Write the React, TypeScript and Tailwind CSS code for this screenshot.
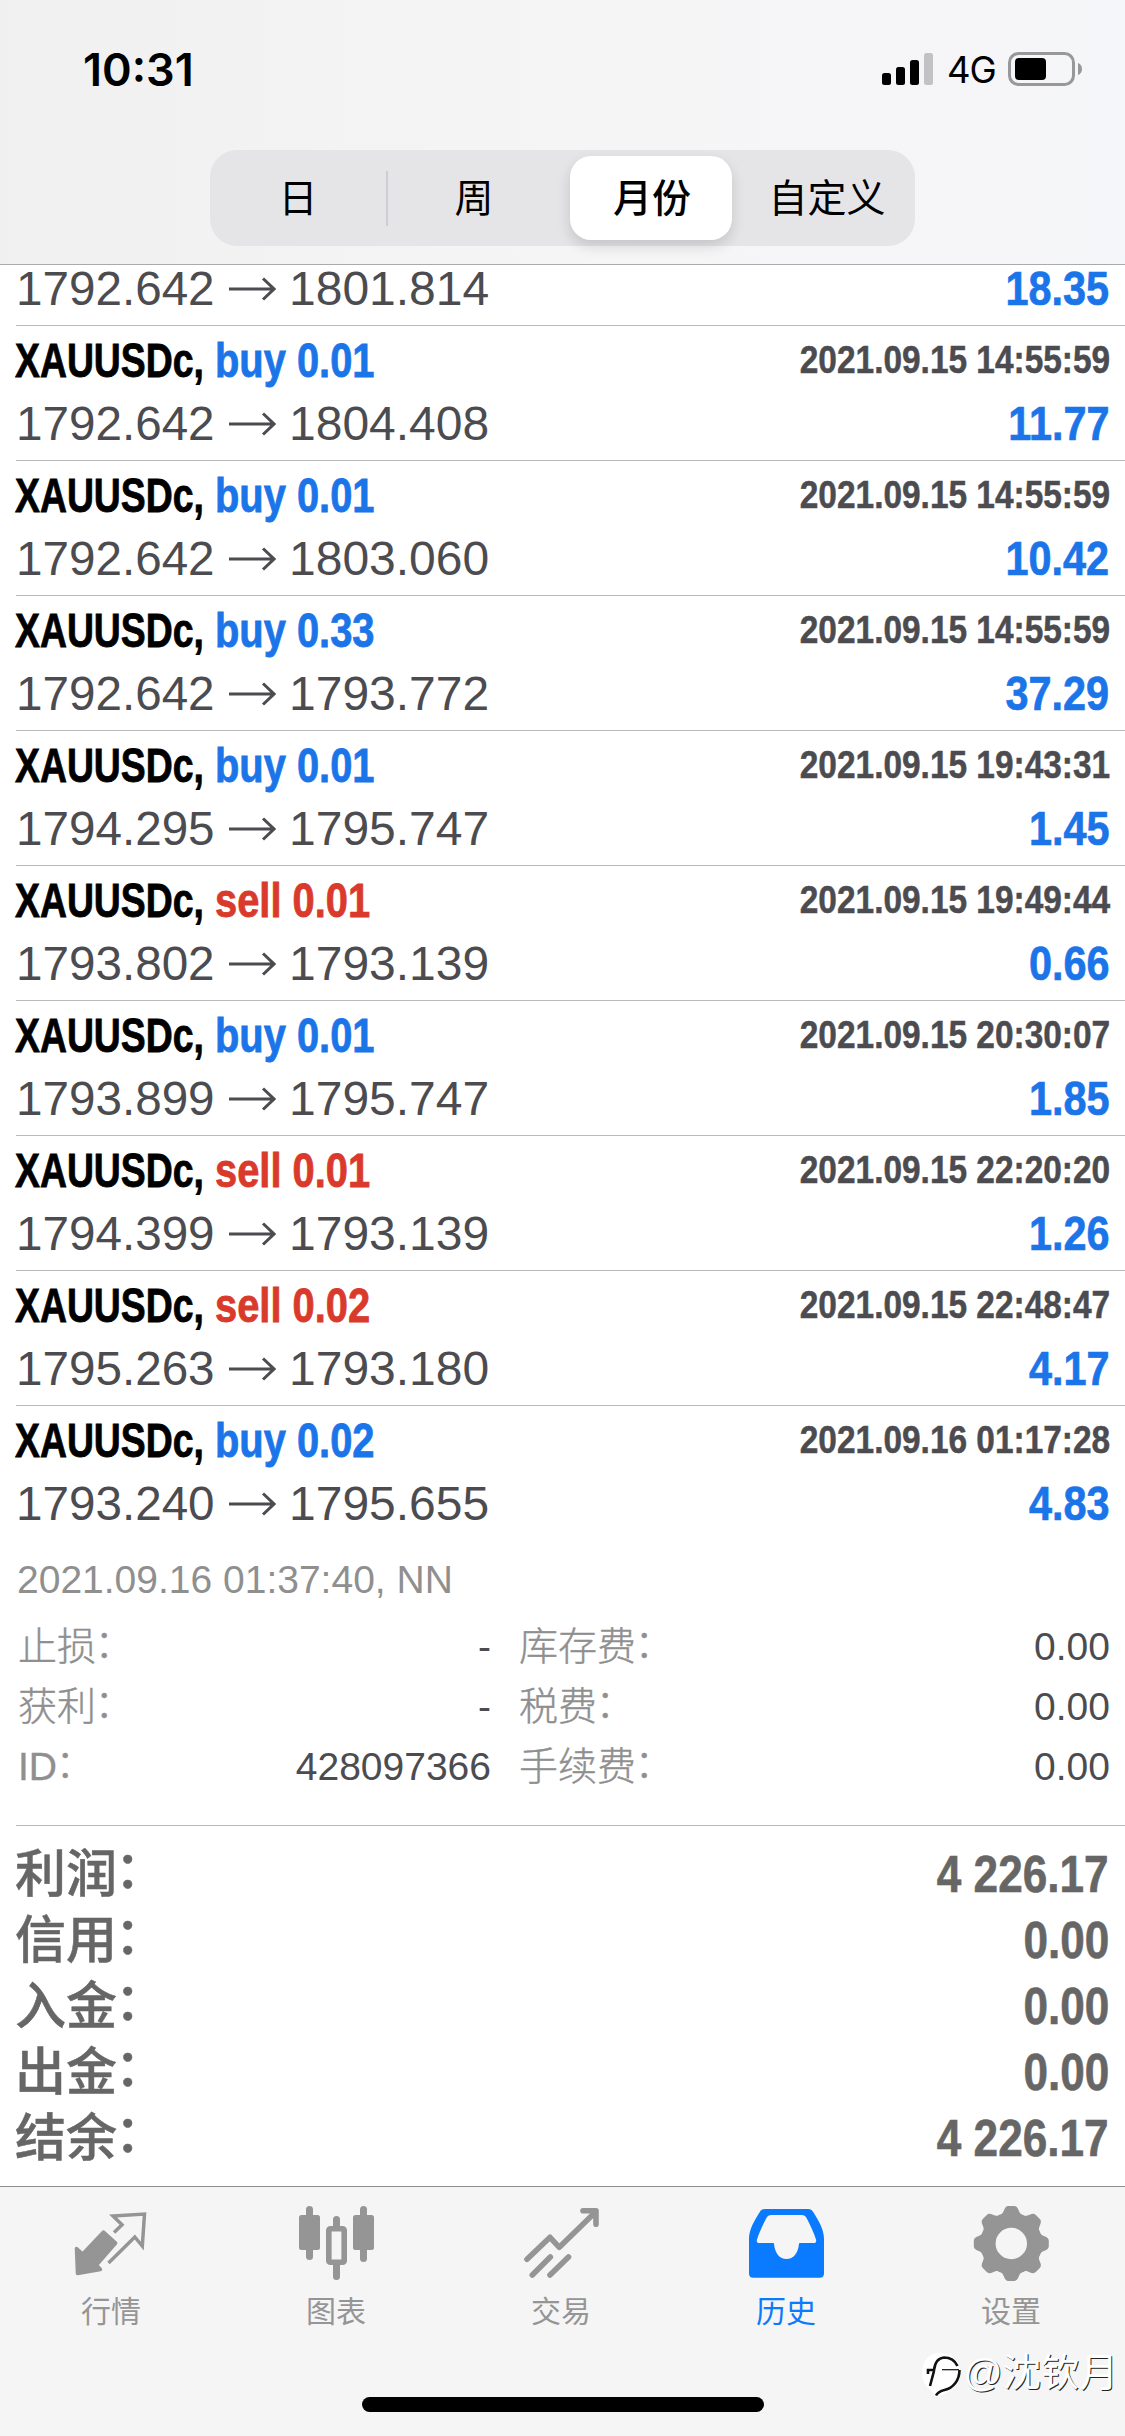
import type { ReactNode } from "react";
import clsx from "clsx";

type Side = "buy" | "sell";

interface Deal {
  side: Side;
  volume: string;
  closedAt: string;
  open: string;
  close: string;
  profit: string;
}

const SYMBOL = "XAUUSDc,";

const deals: Deal[] = [
  { side: "buy", volume: "0.01", closedAt: "2021.09.15 14:55:59", open: "1792.642", close: "1804.408", profit: "11.77" },
  { side: "buy", volume: "0.01", closedAt: "2021.09.15 14:55:59", open: "1792.642", close: "1803.060", profit: "10.42" },
  { side: "buy", volume: "0.33", closedAt: "2021.09.15 14:55:59", open: "1792.642", close: "1793.772", profit: "37.29" },
  { side: "buy", volume: "0.01", closedAt: "2021.09.15 19:43:31", open: "1794.295", close: "1795.747", profit: "1.45" },
  { side: "sell", volume: "0.01", closedAt: "2021.09.15 19:49:44", open: "1793.802", close: "1793.139", profit: "0.66" },
  { side: "buy", volume: "0.01", closedAt: "2021.09.15 20:30:07", open: "1793.899", close: "1795.747", profit: "1.85" },
  { side: "sell", volume: "0.01", closedAt: "2021.09.15 22:20:20", open: "1794.399", close: "1793.139", profit: "1.26" },
  { side: "sell", volume: "0.02", closedAt: "2021.09.15 22:48:47", open: "1795.263", close: "1793.180", profit: "4.17" },
  { side: "buy", volume: "0.02", closedAt: "2021.09.16 01:17:28", open: "1793.240", close: "1795.655", profit: "4.83" },
];

const details = [
  ["止损", "-", "库存费", "0.00"],
  ["获利", "-", "税费", "0.00"],
  ["ID", "428097366", "手续费", "0.00"],
];

const totals = [
  ["利润", "4 226.17"],
  ["信用", "0.00"],
  ["入金", "0.00"],
  ["出金", "0.00"],
  ["结余", "4 226.17"],
];

function StatusBar() {
  return (
    <div className="flex h-[150px] items-start justify-between pr-[42px] pl-[83px]">
      <span className="mt-[47px] font-['Inter',sans-serif] text-[45px] leading-[46px] font-semibold text-black">
        10:31
      </span>
      <div className="mt-[50px] flex h-[38px] items-center">
        <svg className="h-[38px] w-[53px]" viewBox="0 0 53 38">
          <rect x="0" y="23" width="9" height="12" rx="2.5" />
          <rect x="14" y="17" width="9" height="18" rx="2.5" />
          <rect x="28" y="10" width="9" height="25" rx="2.5" />
          <rect x="42" y="3" width="9" height="32" rx="2.5" fill="#c2c2c4" />
        </svg>
        <span className="mt-[2px] ml-[12px] w-[50px] font-['Inter',sans-serif] text-[36.5px] leading-[38px] tracking-[-1px] text-black">
          4G
        </span>
        <svg className="ml-[11px] h-[38px] w-[75px]" viewBox="0 0 75 38">
          <rect x="1.500" y="3.500" width="64" height="31" rx="9" fill="none" stroke="#98989a" strokeWidth="3" />
          <rect x="7" y="8" width="31" height="22" rx="4" />
          <path d="M70 13c3 1.200 4 3.500 4 6s-1 4.800-4 6z" fill="#98989a" />
        </svg>
      </div>
    </div>
  );
}

function PeriodTabs() {
  const cell = "flex w-[176px] items-center justify-center";
  return (
    <div className="mx-auto flex h-[96px] w-[705px] rounded-[27px] bg-[#e5e5e8] text-[39px] leading-none text-black">
      <div className={cell}>日</div>
      <div className="my-auto -mr-0.5 h-[55px] w-0.5 bg-[#cdced3]" />
      <div className={cell}>周</div>
      <div className="w-[177px] pr-[7px] pl-[8px] py-[6px]">
        <div className="flex h-[84px] items-center justify-center rounded-[21px] bg-white pl-[2px] font-medium shadow-[0_6px_14px_rgba(0,0,0,0.14)]">
          月份
        </div>
      </div>
      <div className={cell}>自定义</div>
    </div>
  );
}

function PriceLine({ open, close, profit }: Pick<Deal, "open" | "close" | "profit">) {
  return (
    <>
      <div className="flex items-center text-[48px] text-[#4c4c50]">
        <span className="w-[213px] origin-left scale-x-[0.992]">{open}</span>
        <svg className="h-[24px] w-[47px]" viewBox="0 0 47 24" fill="none" stroke="currentColor" strokeWidth="3">
          <path d="M0 12h45M34 1.500l11 10.500-11 10.500" />
        </svg>
        <span className="ml-[13px]">{close}</span>
      </div>
      <span className="origin-right scale-x-[0.862] text-[48px] font-bold text-[#1b75e8] [-webkit-text-stroke:0.7px]">
        {profit}
      </span>
    </>
  );
}

function DealRow({ deal }: { deal: Deal }) {
  return (
    <div className="ml-[16px] h-[135px] border-t border-[#b9b9bc] pt-[3px] pr-[16px]">
      <div className="flex h-[63px] justify-between leading-[63px] font-bold">
        <div className="-ml-px flex text-[48px] [-webkit-text-stroke:0.8px]">
          <span className="w-[200px] origin-left scale-x-[0.778] whitespace-nowrap text-black">{SYMBOL}</span>
          <span
            className={clsx(
              "origin-left scale-x-[0.83] whitespace-nowrap",
              deal.side === "buy" ? "text-[#1b75e8]" : "text-[#d93a2b]",
            )}
          >
            {deal.side} {deal.volume}
          </span>
        </div>
        <span className="-mr-px origin-right scale-x-[0.857] text-[39px] leading-[61px] text-[#4c4c50] [-webkit-text-stroke:0.5px]">
          {deal.closedAt}
        </span>
      </div>
      <div className="flex h-[63px] justify-between leading-[63px]">
        <PriceLine open={deal.open} close={deal.close} profit={deal.profit} />
      </div>
    </div>
  );
}

// Full-width colon, lifted to the middle of the line
function Label({ children, className }: { children: ReactNode; className?: string }) {
  return (
    <span className={clsx("flex", className)}>
      {children}
      <span className="-ml-[0.04em] -translate-y-[0.07em]">：</span>
    </span>
  );
}

function Icon({ children }: { children: ReactNode }) {
  return (
    <svg className="h-[76px] w-[76px] overflow-visible" viewBox="0 0 76 76" fill="currentColor">
      {children}
    </svg>
  );
}

const QuotesIcon = () => (
  <Icon>
    <path
      d="M3.500 43.500l6.200 5.500L30.500 27l12.200 11L23.500 60l4 4.500L4.500 68.500z"
      stroke="currentColor"
      strokeWidth="3.500"
      strokeLinejoin="round"
    />
    <path d="M41 27.500l8-7.700L40 11l31.500-2-2.200 32-7.500-9L35.500 58" fill="none" stroke="currentColor" strokeWidth="3.500" />
  </Icon>
);

const ChartIcon = () => (
  <Icon>
    <rect x="8" y="1" width="7" height="54" rx="3.500" />
    <rect x="1" y="10" width="21" height="35" rx="2.500" />
    <path d="M35 24v-9.500a3.500 3.500 0 0 1 7 0V24zM35 57v14.500a3.500 3.500 0 0 0 7 0V57z" />
    <rect x="30.800" y="23.800" width="15.400" height="33.400" rx="1.500" fill="none" stroke="currentColor" strokeWidth="5.600" />
    <rect x="62" y="1" width="7" height="56" rx="3.500" />
    <rect x="55" y="10" width="21" height="35" rx="2.500" />
  </Icon>
);

const TradeIcon = () => (
  <Icon>
    <g fill="none" stroke="currentColor" strokeWidth="5.600" strokeLinecap="round" strokeLinejoin="round">
      <path d="M4 54.300l23-22 9.300 10L72 7.500M60 5.800h13v13.500" />
      <path d="M9.300 70l18-18M27 70l18.500-18" />
    </g>
  </Icon>
);

const HistoryIcon = () => (
  <Icon>
    <path
      fillRule="evenodd"
      d="M17 4h43c2.500 0 4 1 5.200 3 5 8 10.800 17 10.800 27v34.500c0 2.800-1.500 4.200-4.200 4.200H5.200C2.500 72.700 1 71.300 1 68.500V34C1 24 6.800 15 11.800 7 13 5 14.500 4 17 4zM23.500 10c-2.600 0-4 1-5.200 3.200C14.500 20.500 11 28 9 34.500c-.6 2.500.2 3.500 2.500 3.500h13.200c1 0 1.300.4 1.400 1.500.8 8.500 5.400 14.500 12.400 14.500s11.600-6 12.400-14.500c.1-1.100.4-1.500 1.400-1.500h13.200c2.300 0 3.100-1 2.500-3.500-2-6.500-5.500-14-9.300-21.300C57.500 11 56.100 10 53.500 10z"
    />
  </Icon>
);

const SettingsIcon = () => (
  <Icon>
    <circle cx="38.300" cy="38.500" r="23.300" fill="none" stroke="currentColor" strokeWidth="15.200" />
    {[0, 45, 90, 135, 180, 225, 270, 315].map((angle) => (
      <path
        key={angle}
        d="M24 11.500c4.500-1 5.500-3 7-6.200C32 2.800 33 1 35.500 1h5.600c2.500 0 3.500 1.800 4.500 4.300 1.500 3.200 2.500 5.200 7 6.200L44 18H32z"
        transform={`rotate(${angle} 38.300 38.500)`}
      />
    ))}
  </Icon>
);

const tabs = [
  { label: "行情", icon: <QuotesIcon /> },
  { label: "图表", icon: <ChartIcon /> },
  { label: "交易", icon: <TradeIcon /> },
  { label: "历史", icon: <HistoryIcon />, active: true },
  { label: "设置", icon: <SettingsIcon /> },
];

function TabBar() {
  return (
    <nav className="h-[250px] border-t border-[#8e8e90] bg-[#f5f5f5]">
      <div className="-ml-[1.5px] flex w-[1125px] pt-[18px]">
        {tabs.map((tab) => (
          <div
            key={tab.label}
            className={clsx("flex flex-1 flex-col items-center", tab.active ? "text-[#0a7aff]" : "text-[#959595]")}
          >
            {tab.icon}
            <span className="mt-[11px] text-[30px] leading-[40px]">{tab.label}</span>
          </div>
        ))}
      </div>
      <div className="mx-auto mt-[65px] h-[15px] w-[402px] rounded-full bg-black" />
    </nav>
  );
}

function Watermark() {
  return (
    <div className="absolute right-[7px] bottom-[36px] flex items-center">
      <svg className="h-[48px] w-[44px]" viewBox="0 0 44 48" fill="none" stroke="#111" strokeWidth="2.600">
        <path d="M21 2C10 2 3 10 3 21c0 8 3 14 9 18l4 7c14-3 25-10 25-25C41 9 32 2 21 2z" fill="#fff" stroke="none" />
        <path d="M9 23v-4h6C16 11 19 7 25 6.500c6 0 11 3 13.500 8.500" />
        <path d="M15 20l-4 15" />
        <path d="M23 18.700h17" strokeWidth="1.200" />
        <path d="M40.500 19c0 10-6 18-15 20-4 1-7 2.500-8.500 5.500" />
      </svg>
      <span className="mb-[3px] text-[38.5px] leading-[48px] font-normal whitespace-nowrap text-white [text-shadow:1px_1px_0_#222]">
        @沈钦月
      </span>
    </div>
  );
}

export default function App() {
  return (
    <div className="relative h-[2436px] w-[1125px] overflow-hidden bg-white font-['Liberation_Sans','Noto_Sans_CJK_SC',sans-serif]">
      <header className="h-[265px] border-b border-[#a9aaae] bg-linear-to-r from-[#f0f0f1] via-[#f5f5f6] to-[#f5f6f9]">
        <StatusBar />
        <PeriodTabs />
      </header>

      <div className="h-[60px] px-[16px]">
        <div className="flex h-[47px] justify-between leading-[47px]">
          <PriceLine open="1792.642" close="1801.814" profit="18.35" />
        </div>
      </div>
      {deals.map((deal, i) => (
        <DealRow key={i} deal={deal} />
      ))}

      <section className="h-[285px] px-[16px] pt-[9px] text-[39px] text-[#8f8f8f]">
        <p className="pl-px leading-[62px]">2021.09.16 01:37:40, NN</p>
        <div className="mt-[6px]">
          {details.map(([left, leftValue, right, rightValue]) => (
            <div key={left} className="-mr-px flex h-[60px] pl-[2px] leading-[60px]">
              <Label className="font-light [-webkit-text-stroke:0.4px]">{left}</Label>
              <span className="ml-auto text-[#4c4c50]">{leftValue}</span>
              <div className="ml-[28px] flex w-[591px] justify-between">
                <Label className="font-light [-webkit-text-stroke:0.4px]">{right}</Label>
                <span className="text-[#4c4c50]">{rightValue}</span>
              </div>
            </div>
          ))}
        </div>
      </section>

      <section className="ml-[16px] h-[361px] border-t border-[#b9b9bc] pt-[16px] pr-[16px] text-[#666]">
        {totals.map(([label, value]) => (
          <div key={label} className="flex h-[66px] justify-between text-[51px] leading-[66px]">
            <Label className="-ml-px font-medium [-webkit-text-stroke:0.5px]">{label}</Label>
            <span className="origin-right scale-x-[0.865] font-bold [-webkit-text-stroke:0.6px]">{value}</span>
          </div>
        ))}
      </section>

      <TabBar />
      <Watermark />
    </div>
  );
}
